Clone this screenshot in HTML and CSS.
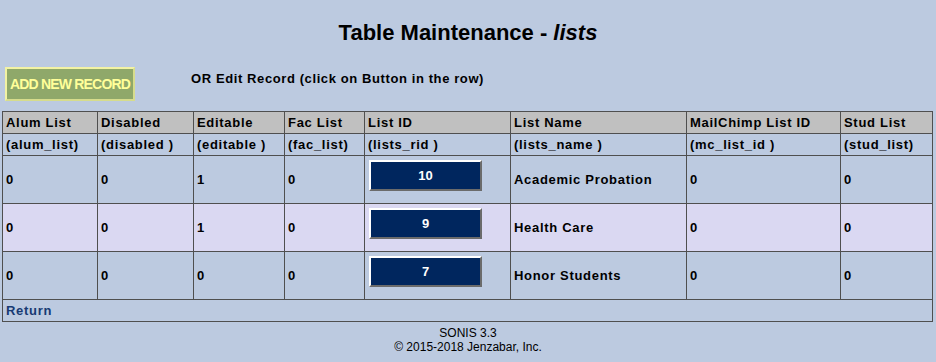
FILE: index.html
```html
<!DOCTYPE html>
<html lang="en">
<head>
  <meta charset="UTF-8" />
  <title>Table Maintenance - lists</title>
  <link rel="stylesheet" href="styles.css">
</head>
<body>

  <h1 class="page-title">Table Maintenance - <i>lists</i></h1>

  <div class="toolbar">
    <button class="add-btn">ADD NEW RECORD</button>
    <span class="toolbar-note">OR Edit Record (click on Button in the row)</span>
  </div>

  <table class="grid">
    <colgroup>
      <col style="width:95px">
      <col style="width:96px">
      <col style="width:91px">
      <col style="width:80px">
      <col style="width:146px">
      <col style="width:176px">
      <col style="width:154px">
      <col>
    </colgroup>
    <tr class="head">
      <td>Alum List</td>
      <td>Disabled</td>
      <td>Editable</td>
      <td>Fac List</td>
      <td>List ID</td>
      <td>List Name</td>
      <td>MailChimp List ID</td>
      <td>Stud List</td>
    </tr>
    <tr class="fields">
      <td>(alum_list)</td>
      <td>(disabled )</td>
      <td>(editable )</td>
      <td>(fac_list)</td>
      <td>(lists_rid )</td>
      <td>(lists_name )</td>
      <td>(mc_list_id )</td>
      <td>(stud_list)</td>
    </tr>
    <tr class="row">
      <td>0</td><td>0</td><td>1</td><td>0</td>
      <td><button class="id-btn">10</button></td>
      <td>Academic Probation</td><td>0</td><td>0</td>
    </tr>
    <tr class="row alt">
      <td>0</td><td>0</td><td>1</td><td>0</td>
      <td><button class="id-btn">9</button></td>
      <td>Health Care</td><td>0</td><td>0</td>
    </tr>
    <tr class="row">
      <td>0</td><td>0</td><td>0</td><td>0</td>
      <td><button class="id-btn">7</button></td>
      <td>Honor Students</td><td>0</td><td>0</td>
    </tr>
    <tr class="foot">
      <td colspan="8"><a href="#" class="return-link">Return</a></td>
    </tr>
  </table>

  <div class="footer">
    SONIS 3.3<br>
    &copy; 2015-2018 Jenzabar, Inc.
  </div>

</body>
</html>
```

FILE: styles.css
```css
/* Base */
body {
  margin: 0;
  padding: 0 2px;
  background: #bccae0;
  font-family: "Liberation Sans", Arial, sans-serif;
  color: #000;
}

.page-title {
  margin: 0;
  padding-top: 21px;
  height: 67px;
  box-sizing: border-box;
  text-align: center;
  font-size: 22px;
  font-weight: bold;
  line-height: 24px;
}

/* Add / edit bar */
.toolbar {
  display: flex;
  align-items: flex-start;
  height: 44px;
  padding-left: 3px;
}

.add-btn {
  width: 130px;
  height: 34px;
  padding: 0;
  background: #8fa86a;
  color: #ffff99;
  border: 2px solid;
  border-color: #f2f2a4 #d6dc8c #d6dc8c #f2f2a4;
  font-family: "Liberation Sans", Arial, sans-serif;
  font-size: 14px;
  font-weight: bold;
  letter-spacing: -0.8px;
  cursor: pointer;
}

.toolbar-note {
  margin: 4px 0 0 56px;
  font-size: 13px;
  line-height: 16px;
  font-weight: bold;
  letter-spacing: 0.6px;
}

/* Grid */
.grid {
  width: 931px;
  border-collapse: collapse;
  table-layout: fixed;
  font-size: 13px;
  font-weight: bold;
  letter-spacing: 0.7px;
}

.grid td {
  border: 1px solid #4f4f4f;
  padding: 0 3px;
  white-space: nowrap;
  overflow: hidden;
}

.grid .head td {
  background: #c0c0c0;
  height: 21px;
}

.grid .fields td {
  height: 21px;
}

.grid .row td {
  height: 47px;
}

.grid .row.alt td {
  background: #dad8f2;
}

.grid .foot td {
  height: 21px;
}

.id-btn {
  display: block;
  width: 113px;
  height: 31px;
  margin: -8px 0 0 1px;
  padding: 0;
  background: #00265e;
  color: #fff;
  border: 2px solid;
  border-color: #fff #6b6b6b #6b6b6b #fff;
  font-family: "Liberation Sans", Arial, sans-serif;
  font-size: 13px;
  font-weight: bold;
  cursor: pointer;
}

.return-link {
  color: #173a73;
  text-decoration: none;
}

.footer {
  padding-top: 4px;
  text-align: center;
  font-size: 12px;
  line-height: 14px;
}
```
